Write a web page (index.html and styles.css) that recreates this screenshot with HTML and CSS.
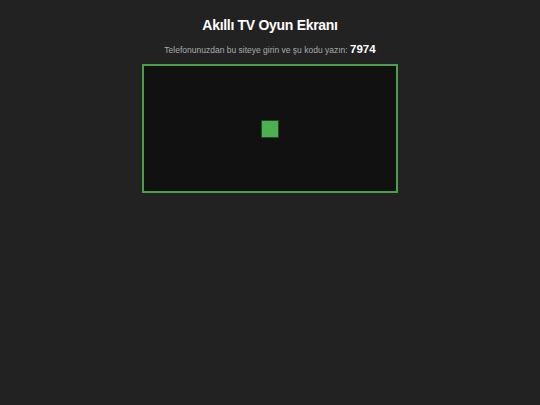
FILE: index.html
```html
<!DOCTYPE html>
<html lang="tr">
<head>
<meta charset="utf-8">
<title>Akıllı TV Oyun Ekranı</title>
<link rel="stylesheet" href="styles.css">
</head>
<body>
<main class="page">
  <h1 class="title">Akıllı TV Oyun Ekranı</h1>
  <p class="info">Telefonunuzdan bu siteye girin ve şu kodu yazın: <span class="code">7974</span></p>
  <div class="screen">
    <div class="player"></div>
  </div>
</main>
</body>
</html>
```
FILE: styles.css
```css
html, body {
  margin: 0;
  padding: 0;
  background: #222222;
  height: 100%;
}
body {
  font-family: "Liberation Sans", Arial, sans-serif;
  color: #ffffff;
}
.page {
  display: flex;
  flex-direction: column;
  align-items: center;
  padding-top: 16px;
}
.title {
  margin: 0;
  font-size: 14px;
  letter-spacing: -0.3px;
  font-weight: bold;
  line-height: 18px;
}
.info {
  margin: 8px 0 0 0;
  font-size: 8.5px;
  color: #aaaaaa;
  line-height: 14px;
}
.code {
  font-size: 11.5px;
  font-weight: bold;
  color: #ffffff;
}
.screen {
  margin-top: 7px;
  box-sizing: border-box;
  width: 256px;
  height: 129px;
  border: 2px solid #4a9e4d;
  background: #111111;
  display: flex;
  align-items: center;
  justify-content: center;
}
.player {
  width: 16px;
  height: 16px;
  background: #4caf50;
  border: 1px solid #1f4a21;
}
```
